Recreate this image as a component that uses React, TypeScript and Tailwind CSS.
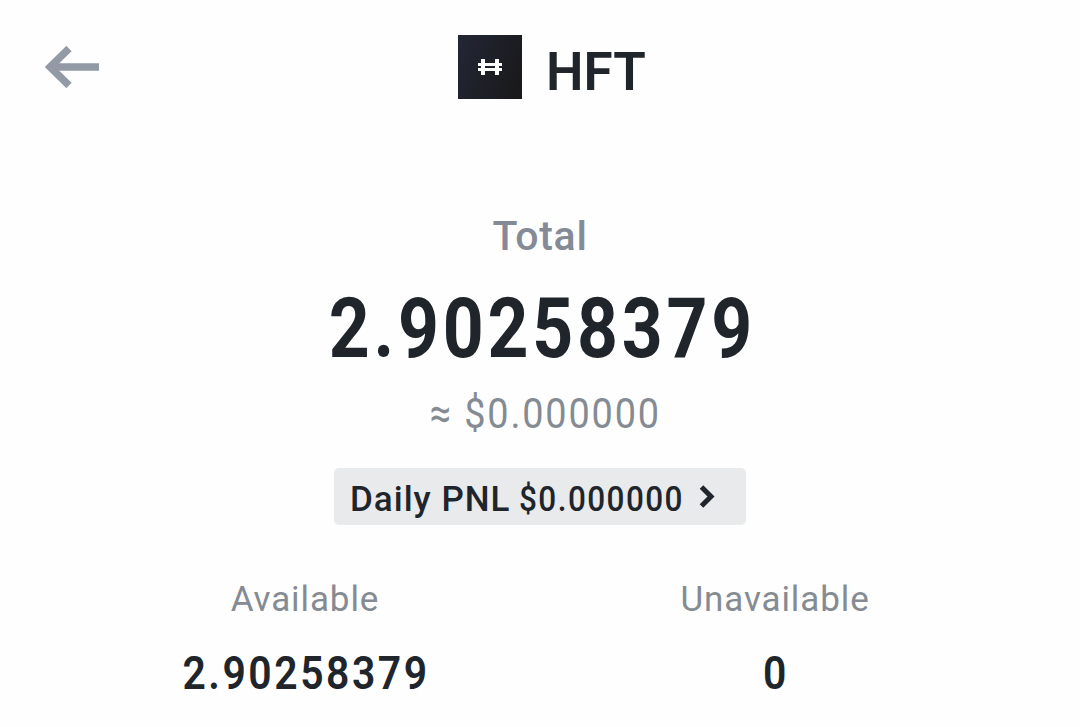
import clsx from 'clsx';

function BackIcon() {
    return (
        <svg width="54" height="42" viewBox="0 0 54 42" fill="none" stroke="#929aa5" strokeWidth="7.5">
            <path d="M54 21H7" />
            <path d="M24 2.5L5 21l19 18.5" />
        </svg>
    );
}

function HftLogo() {
    return (
        <svg width="64" height="64" viewBox="0 0 64 64">
            <defs>
                <linearGradient id="hft" x1="0" y1="0.2" x2="1" y2="0.6">
                    <stop offset="0" stopColor="#222634" />
                    <stop offset="1" stopColor="#1a1a1c" />
                </linearGradient>
            </defs>
            <rect width="64" height="64" fill="url(#hft)" />
            <path fill="#fff" d="M23 24h4v16h-4zM37 24h4v16h-4zM20 28h24v3H20zM20 33h24v3H20z" />
        </svg>
    );
}

type AmountProps = { children: string; className?: string };

function Amount({ children, className }: AmountProps) {
    return (
        <span className={clsx('block whitespace-nowrap leading-none', className)}>
            {children}
        </span>
    );
}

function Balance({ label, value }: { label: string; value: string }) {
    return (
        <div className="flex w-[470px] flex-col items-center">
            <span className="text-[35px] leading-none tracking-[0.9px] text-[#858b92]">{label}</span>
            <Amount className="mt-[32px] ml-[2px] scale-x-[0.87] text-[47px] font-semibold tracking-[2.9px]">{value}</Amount>
        </div>
    );
}

export default function App() {
    return (
        <main className="flex h-[727px] w-[1080px] flex-col overflow-hidden bg-[#fefefe] font-['Roboto',sans-serif] text-[#20252c]">
            <header className="flex h-[99px] items-start pt-[35px] pl-[45px]">
                <button className="mt-[11px]" aria-label="Back">
                    <BackIcon />
                </button>
                <div className="ml-[359px] flex">
                    <HftLogo />
                    <h1 className="mt-[11px] ml-[24px] text-[53px] leading-none font-semibold">HFT</h1>
                </div>
            </header>

            <section className="flex flex-col items-center pt-[116px]">
                <span className="text-[41px] leading-[42px] font-medium tracking-[0.7px] text-[#848b96]">Total</span>
                <Amount className="mt-[30px] ml-[5px] scale-x-[0.86] text-[83px] font-bold tracking-[4.4px]">2.90258379</Amount>
                <Amount className="mt-[22px] ml-[10px] scale-x-[0.88] text-[43px] tracking-[2.1px] text-[#858b93]">≈ $0.000000</Amount>
                <button className="mt-[33px] flex h-[57px] w-[412px] items-center rounded-[5px] bg-[#e9eaeb] pl-4">
                    <span className="flex gap-[9px] pt-[5px] text-[35px] leading-none font-medium whitespace-nowrap">
                        <span className="w-[160px] tracking-[1px]">Daily PNL</span>
                        <Amount className="w-[164px] origin-left scale-x-[0.9] tracking-[1.6px]">$0.000000</Amount>
                    </span>
                    <svg className="ml-4" width="16" height="24" viewBox="0 0 16 24" fill="none" stroke="currentColor" strokeWidth="5">
                        <path d="M2.5 2L12 11.5 2.5 21" />
                    </svg>
                </button>
            </section>

            <section className="flex justify-center pt-[57px]">
                <Balance label="Available" value="2.90258379" />
                <Balance label="Unavailable" value="0" />
            </section>
        </main>
    );
}
